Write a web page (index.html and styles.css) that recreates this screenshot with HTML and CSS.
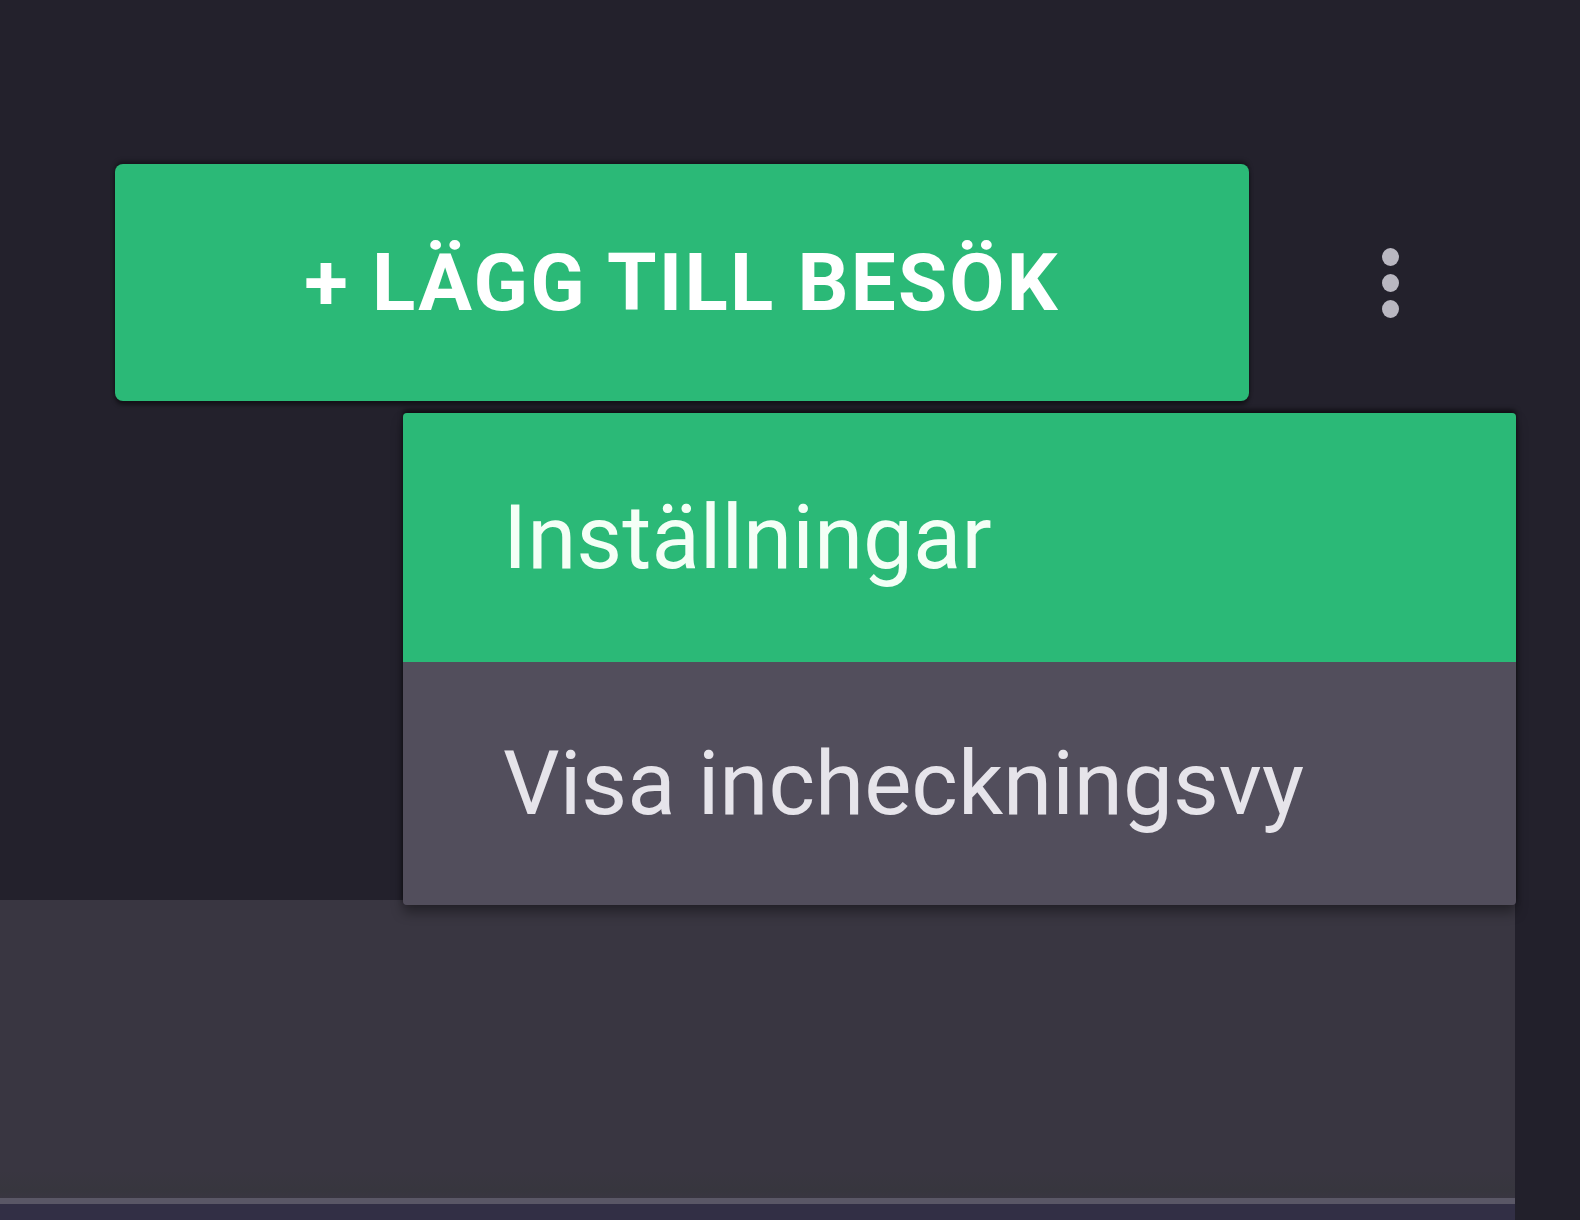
FILE: index.html
```html
<!DOCTYPE html>
<html lang="sv">
<head>
  <meta charset="UTF-8">
  <meta name="viewport" content="width=device-width, initial-scale=1.0">
  <title>Besök</title>
  <link rel="stylesheet" href="styles.css">
</head>
<body>
  <div class="page">
    <div class="top">
      <div class="toolbar">
        <button class="add-btn" type="button">+ Lägg till besök</button>
        <button class="more-btn" type="button" aria-label="Mer">
          <span class="dot"></span>
          <span class="dot"></span>
          <span class="dot"></span>
        </button>
      </div>
    </div>
    <div class="bottom">
      <div class="card"></div>
      <div class="card-line"></div>
      <div class="next-row"></div>
    </div>

    <!-- meny som visas under tre-punkts knappen -->
    <div class="menu">
      <div class="menu-item active">Inställningar</div>
      <div class="menu-item">Visa incheckningsvy</div>
    </div>
  </div>
</body>
</html>
```

FILE: styles.css
```css
/* Grundstilar */
html, body {
  margin: 0;
  padding: 0;
}
body {
  font-family: Roboto, "Liberation Sans", Arial, sans-serif;
  background-color: #22202b;
  overflow: hidden;
}
.page {
  position: relative;
  width: 1580px;
  height: 1220px;
  display: flex;
  flex-direction: column;
}
.top {
  height: 900px;
  background-color: #23212c;
}
.toolbar {
  display: flex;
  align-items: center;
  padding: 164px 0 0 115px;
}
.add-btn {
  width: 1134px;
  height: 237px;
  padding: 0;
  border: none;
  border-radius: 8px;
  background-color: #2bb977;
  color: #fff;
  font-family: Roboto, "Liberation Sans", Arial, sans-serif;
  font-size: 80px;
  font-weight: 700;
  letter-spacing: 2.2px;
  text-transform: uppercase;
  box-shadow: 0 4px 4px rgba(0, 0, 0, 0.45), 0 -3px 4px rgba(0, 0, 0, 0.35);
  cursor: pointer;
}
.more-btn {
  display: flex;
  flex-direction: column;
  align-items: center;
  gap: 8px;
  margin-left: 133px;
  padding: 0;
  border: none;
  background: none;
  cursor: pointer;
}
.dot {
  width: 17px;
  height: 18px;
  border-radius: 50%;
  background-color: #b9b7c1;
}
.bottom {
  flex: 1;
  display: flex;
  flex-direction: column;
  width: 1515px;
}
.card {
  height: 298px;
  background: linear-gradient(#393641 0, #393641 270px, #37363e 290px, #393641 298px);
}
.card-line {
  height: 6px;
  background-color: #5a5766;
}
.next-row {
  flex: 1;
  background-color: #322f45;
}
.menu {
  position: absolute;
  left: 403px;
  top: 413px;
  width: 1113px;
  border-radius: 4px;
  overflow: hidden;
  box-shadow: 0 -3px 5px rgba(0, 0, 0, 0.6), 0 8px 12px rgba(0, 0, 0, 0.35);
}
.menu-item {
  display: flex;
  align-items: center;
  height: 243px;
  padding-left: 100px;
  background-color: #524e5c;
  color: #e6e4ea;
  font-size: 89px;
}
.menu-item.active {
  height: 249px;
  background-color: #2bb977;
  color: #f4fff6;
}
```
